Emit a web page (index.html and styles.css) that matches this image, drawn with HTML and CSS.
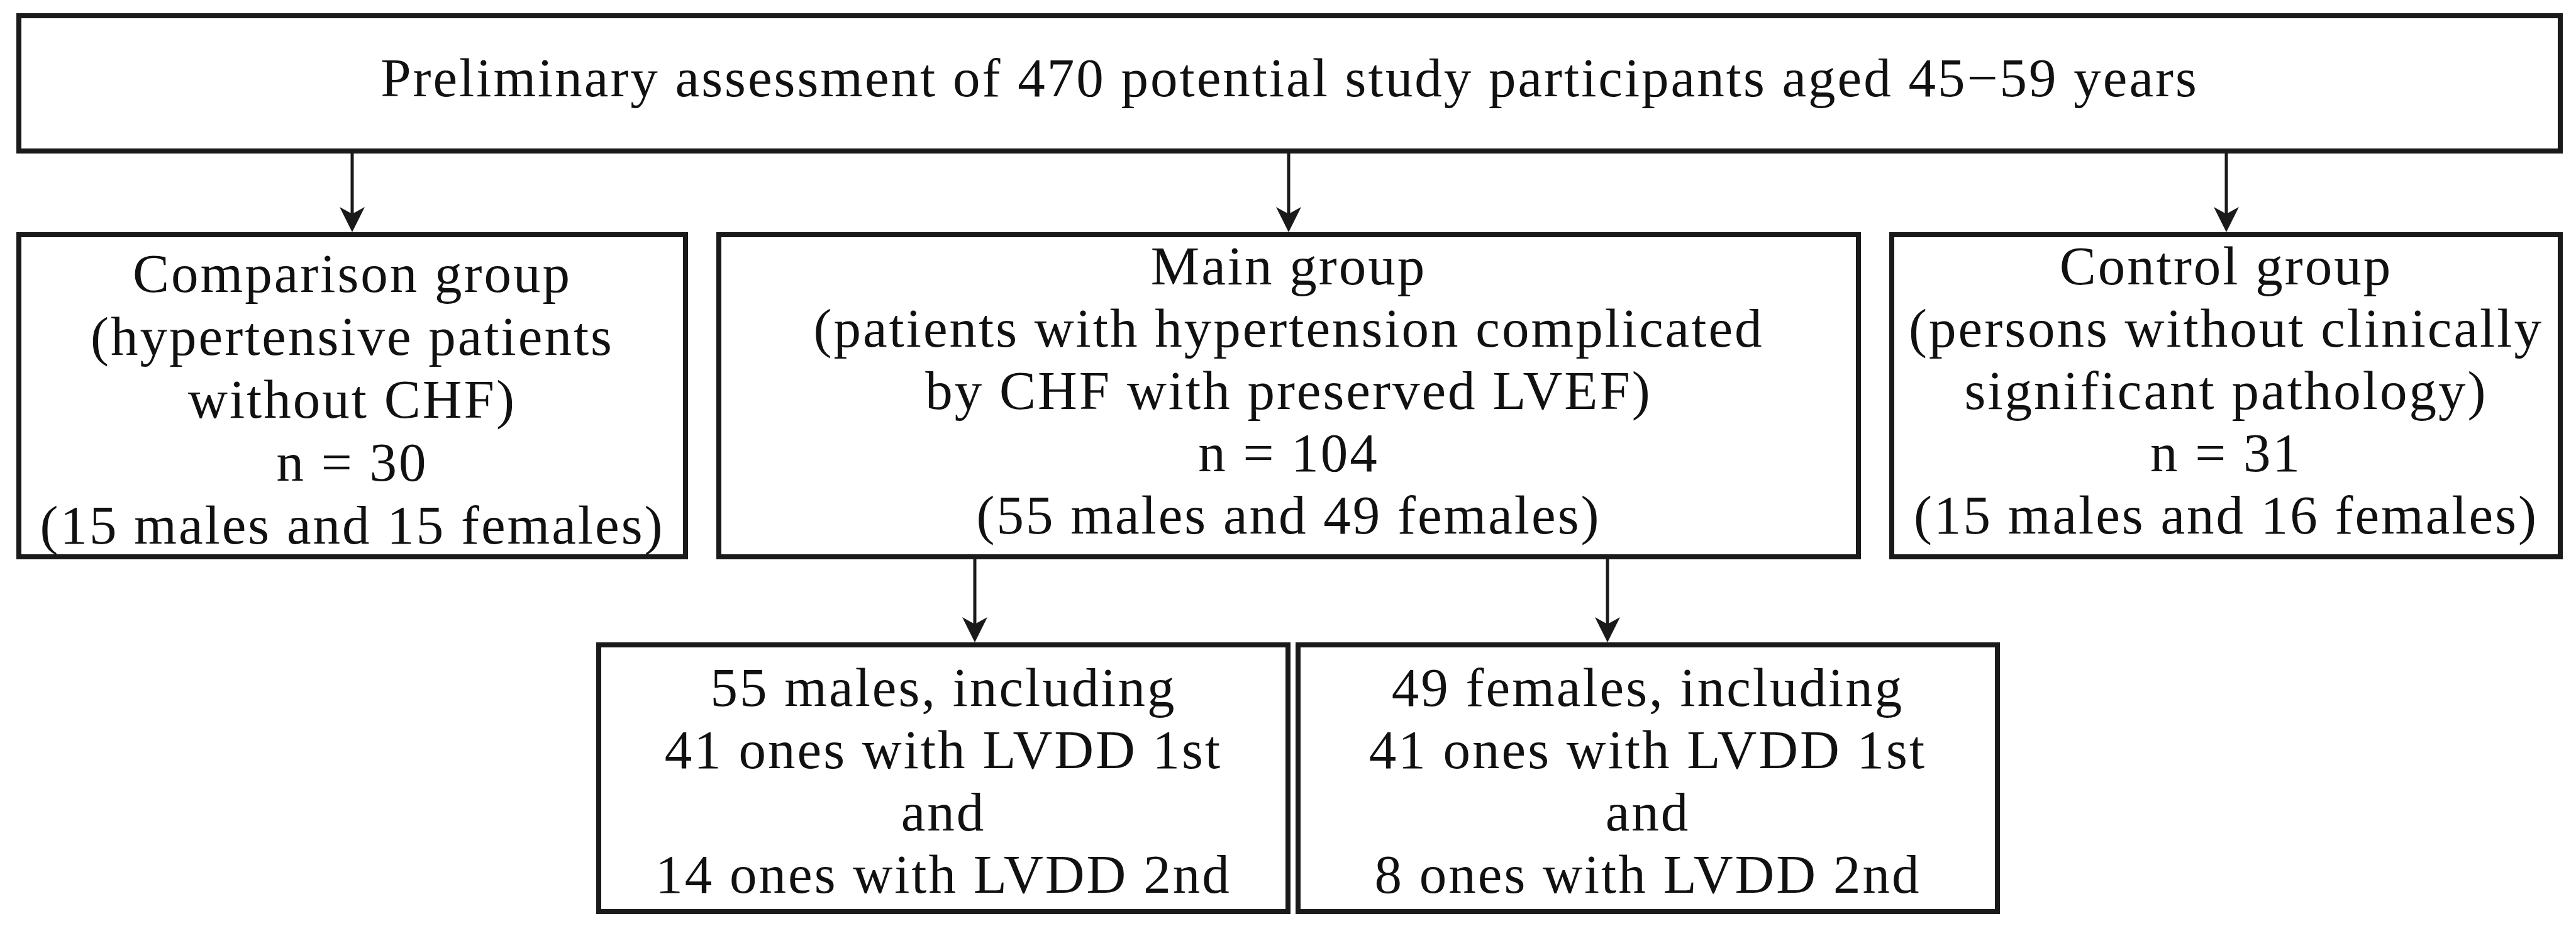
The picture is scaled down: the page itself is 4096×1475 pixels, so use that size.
FILE: index.html
```html
<!DOCTYPE html>
<html lang="en">
<head>
<meta charset="utf-8">
<title>Study flowchart</title>
<link rel="stylesheet" href="styles.css">
</head>
<body>
<div class="chart">
  <div class="box top-box">
    <div class="txt">Preliminary assessment of 470 potential study participants aged 45−59 years</div>
  </div>

  <div class="conn conn-1">
    <div class="cell">
      <svg class="arrow" width="40" height="125" viewBox="0 0 40 125"><line x1="20" y1="0" x2="20" y2="100" stroke="#1a1a1a" stroke-width="5"/><path d="M0 85 L20 125 L40 85 L20 96 Z" fill="#1a1a1a"/></svg>
    </div>
    <div class="cell">
      <svg class="arrow" width="40" height="125" viewBox="0 0 40 125"><line x1="20" y1="0" x2="20" y2="100" stroke="#1a1a1a" stroke-width="5"/><path d="M0 85 L20 125 L40 85 L20 96 Z" fill="#1a1a1a"/></svg>
    </div>
    <div class="cell">
      <svg class="arrow" width="40" height="125" viewBox="0 0 40 125"><line x1="20" y1="0" x2="20" y2="100" stroke="#1a1a1a" stroke-width="5"/><path d="M0 85 L20 125 L40 85 L20 96 Z" fill="#1a1a1a"/></svg>
    </div>
  </div>

  <div class="mid-row">
    <div class="box mid-box comparison">
      <div class="txt">Comparison group<br>(hypertensive patients<br>without CHF)<br>n = 30<br>(15 males and 15 females)</div>
    </div>
    <div class="box mid-box main">
      <div class="txt">Main group<br>(patients with hypertension complicated<br>by CHF with preserved LVEF)<br>n = 104<br>(55 males and 49 females)</div>
    </div>
    <div class="box mid-box control">
      <div class="txt">Control group<br>(persons without clinically<br>significant pathology)<br>n = 31<br>(15 males and 16 females)</div>
    </div>
  </div>

  <div class="conn conn-2">
    <svg class="arrow" width="40" height="132" viewBox="0 0 40 132"><line x1="20" y1="0" x2="20" y2="107" stroke="#1a1a1a" stroke-width="5"/><path d="M0 92 L20 132 L40 92 L20 103 Z" fill="#1a1a1a"/></svg>
    <svg class="arrow" width="40" height="132" viewBox="0 0 40 132"><line x1="20" y1="0" x2="20" y2="107" stroke="#1a1a1a" stroke-width="5"/><path d="M0 92 L20 132 L40 92 L20 103 Z" fill="#1a1a1a"/></svg>
  </div>

  <div class="bottom-row">
    <div class="box low-box males">
      <div class="txt">55 males, including<br>41 ones with LVDD 1st<br>and<br>14 ones with LVDD 2nd</div>
    </div>
    <div class="box low-box females">
      <div class="txt">49 females, including<br>41 ones with LVDD 1st<br>and<br>8 ones with LVDD 2nd</div>
    </div>
  </div>
</div>
</body>
</html>
```

FILE: styles.css
```css
html, body {
  margin: 0;
  padding: 0;
  background: #ffffff;
}

.chart {
  width: 4049px;
  margin: 21px 0 0 26px;
  font-family: "Liberation Serif", "Times New Roman", serif;
  font-size: 87px;
  letter-spacing: 3px;
  color: #111111;
}

.box {
  box-sizing: border-box;
  border: 8px solid #1a1a1a;
  background: #ffffff;
  text-align: center;
  white-space: nowrap;
}

.txt {
  line-height: 99px;
}

.top-box {
  height: 223px;
  padding-top: 45px;
}

.conn {
  display: flex;
}

.conn-1 {
  display: grid;
  grid-template-columns: 1068px 1820px 1071px;
  column-gap: 45px;
  height: 125px;
}

.conn-1 .cell {
  display: flex;
  justify-content: center;
}

.arrow {
  display: block;
}

.mid-row {
  display: grid;
  grid-template-columns: 1068px 1820px 1071px;
  column-gap: 45px;
  height: 520px;
}

.mid-box {
  height: 520px;
}

.mid-box .txt {
  margin-top: -4px;
}

.comparison .txt {
  margin-top: 8px;
  line-height: 100px;
}

.conn-2 {
  height: 132px;
  padding-left: 1504px;
  gap: 966px;
}

.bottom-row {
  display: flex;
  margin-left: 922px;
  gap: 8px;
}

.low-box {
  height: 432px;
  padding-top: 14px;
}

.males {
  width: 1104px;
}

.females {
  width: 1120px;
}
```
